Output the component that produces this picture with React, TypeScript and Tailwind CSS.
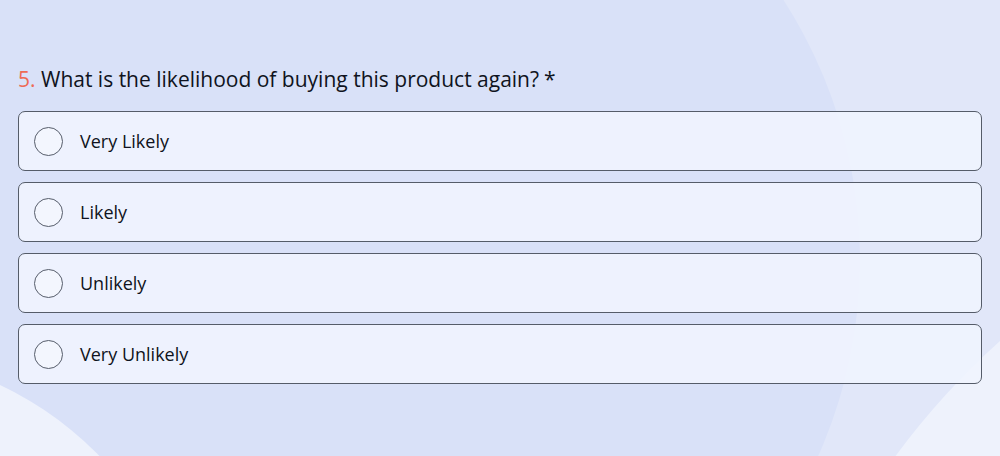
import React from 'react';

const options = ['Very Likely', 'Likely', 'Unlikely', 'Very Unlikely'];

function OptionRow({ label }: { label: string }) {
  return (
    <label className="flex h-[60px] cursor-pointer items-center rounded-[7px] border border-[#555c69] bg-[#f0f4fe]/90 pl-[15px]">
      <span className="h-[29px] w-[29px] shrink-0 rounded-full border-[1.5px] border-[#565d6b] bg-[#f3f6fe]" />
      <span className="ml-[17px] text-[18px] text-[#0f1320]">{label}</span>
    </label>
  );
}

export default function App() {
  return (
    <div
      className="relative h-[456px] w-[1000px] overflow-hidden bg-[#e1e7f9]"
      style={{ fontFamily: '"Open Sans", "Noto Sans", sans-serif' }}
    >
      {/* background blobs */}
      <div className="absolute left-[-100px] top-[-220px] h-[960px] w-[960px] rounded-full bg-[#d9e1f8]" />
      <div className="absolute left-[-499px] top-[351px] h-[698px] w-[698px] rounded-full bg-[#eef2fc]" />
      <div className="absolute left-[750px] top-[150px] h-[1500px] w-[1500px] rounded-full bg-[#eef2fc]" />

      <div className="relative px-[18px] pt-[64px]">
        <h2 className="text-[21px] leading-[30px] text-[#0f1320]">
          <span className="text-[#ee6a55]">5.</span> What is the likelihood of buying this product again?
          <span className="ml-[5px]">*</span>
        </h2>
        <div className="mt-[17px] flex flex-col gap-[11px]">
          {options.map((o) => (
            <OptionRow key={o} label={o} />
          ))}
        </div>
      </div>
    </div>
  );
}
